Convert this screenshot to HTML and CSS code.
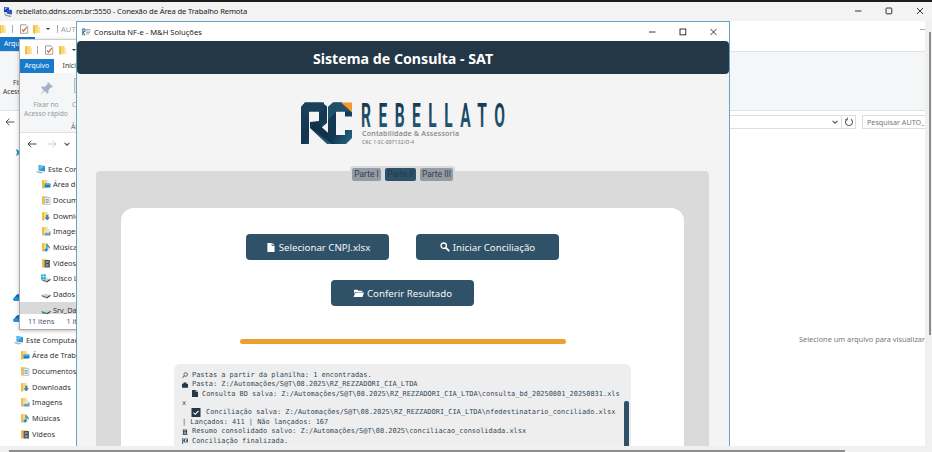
FILE: index.html
```html
<!DOCTYPE html>
<html lang="pt-BR">
<head>
<meta charset="utf-8">
<title>Conexão de Área de Trabalho Remota</title>
<link rel="stylesheet" href="styles.css">
</head>
<body>
<svg width="0" height="0" class="defs">
  <defs>
    <symbol id="folder" viewBox="0 0 10 10"><path d="M1 1h5.5v8H1z" fill="#f8d775"/><path d="M1 1l2 .8V10L1 9z" fill="#eebd4a"/><path d="M6.5 3H8v6H6.500z" fill="#fbe49b"/></symbol>
    <symbol id="check" viewBox="0 0 10 10"><path d="M1.500.8h5.500l1.700 1.700v6.800H1.500z" fill="#fff" stroke="#8c8c8c" stroke-width=".8"/><path d="M3 5.300l1.600 1.900L7.700 3" fill="none" stroke="#dc6030" stroke-width="1.200"/></symbol>
    <symbol id="pc" viewBox="0 0 10 10"><path d="M2.500 1l6.500 1v5.500l-6.500-1z" fill="#2d96d8"/><path d="M3 1.600l5 .8L3.500 6z" fill="#62bdf0"/><path d="M.5 7l5 .8 2 1-3 .7L.5 8.300z" fill="#a8b6c2"/></symbol>
    <symbol id="desk" viewBox="0 0 10 10"><use href="#folder"/><path d="M3.500 4.500h6v4h-6z" fill="#1582ca"/><path d="M4 5h5v1H4z" fill="#3fadea"/></symbol>
    <symbol id="docs" viewBox="0 0 10 10"><use href="#folder"/><path d="M3.500 2.500h5.500v7H3.500z" fill="#e8eff5" stroke="#92a6b5" stroke-width=".5"/><path d="M4.500 4.500h3M4.500 6h3.500M4.500 7.500h3" stroke="#568aae" stroke-width=".7"/></symbol>
    <symbol id="down" viewBox="0 0 10 10"><use href="#folder"/><path d="M5.300 3.800h2v2.500H9L6.300 9.300 3.700 6.300h1.600z" fill="#2982c9"/></symbol>
    <symbol id="imgs" viewBox="0 0 10 10"><use href="#folder"/><path d="M3.500 4.500h6v5h-6z" fill="#d5e6f1"/><path d="M3.500 9.500V7.500l2-1 1.500.8 2.500-2v4.200z" fill="#779cb5"/></symbol>
    <symbol id="music" viewBox="0 0 10 10"><use href="#folder"/><path d="M6 2v6M6 2.500c.5 1.500 2.500 1.500 2.500 3.800" fill="none" stroke="#1690dd" stroke-width="1.200"/><circle cx="5" cy="8" r="1.600" fill="#1690dd"/></symbol>
    <symbol id="video" viewBox="0 0 10 10"><use href="#folder"/><path d="M3.500 2h5.500v7.500H3.500z" fill="#45494d"/><path d="M5 3h2.500v2H5zM5 6h2.500v2.500H5z" fill="#8294a4"/><path d="M4.100 2.500v7M8.400 2.500v7" stroke="#ccc" stroke-width=".5" stroke-dasharray=".7 .7"/></symbol>
    <symbol id="disk" viewBox="0 0 10 10"><path d="M.5 6l4-1.200 5 1-3.500 2.200z" fill="#d2d2d2"/><path d="M.5 6L6 8v1.400L.5 7.300z" fill="#6f6f6f"/><path d="M6 8l3.500-2.200v1.300L6 9.400z" fill="#3f3f3f"/></symbol>
    <symbol id="windisk" viewBox="0 0 10 10"><use href="#disk"/><path d="M0 1.500h2v2H0zM2.400 1.200h2.400v2.300H2.400zM0 3.900h2v2H0zM2.400 3.900h2.400v2.300H2.400z" fill="#1ab0e8"/></symbol>
    <symbol id="netdisk" viewBox="0 0 10 10"><use href="#disk"/><path d="M1 6.800l4 1.400v1.600L1 8.300z" fill="#3aa64a"/></symbol>
    <symbol id="back" viewBox="0 0 10 10"><path d="M9.500 5H1M4.300 1.800L1 5l3.300 3.200" fill="none" stroke="currentColor"/></symbol>
    <symbol id="down-chev" viewBox="0 0 10 10"><path d="M2 3.500l3 3 3-3" fill="none" stroke="currentColor" stroke-width="1.400"/></symbol>
    <symbol id="pin" viewBox="0 0 16 16"><path d="M9.500 1l5.500 5-1.500.8-1 0-2.500 3 .2 2.700-1.200 1-3-2.800L1 15l4-5.200L2.300 7l1-1.200 2.900.2 3-2.700-.2-1z" fill="#a4b3ca"/></symbol>
    <symbol id="cloud" viewBox="0 0 12 8"><path d="M2.500 8C-.5 8-.3 4.500 2 4.300 2.300 1.500 5.500 0 8 1.500 11 1.500 12 4 12 8z" fill="#0f6cbd"/><path d="M2 4.300C5 3.500 7 5.500 8 8H2.500C0 8-.3 4.800 2 4.300z" fill="#2492e0"/></symbol>
    <linearGradient id="navy" x2="1" y2="1"><stop offset="0" stop-color="#1c405b"/><stop offset=".5" stop-color="#123650"/><stop offset="1" stop-color="#24698a"/></linearGradient>
    <linearGradient id="ink" y2="1" x2="0"><stop offset="0" stop-color="#133249"/><stop offset="1" stop-color="#25617c"/></linearGradient>
  </defs>
</svg>
<div class="screen">
  <header class="rdp-bar">
    <svg class="rdp-icon" viewBox="0 0 10 11"><path d="M1 1l5 .5v5L1 6z" fill="#2334ad"/><path d="M4 3.500l5 .6v4.500l-5-.8z" fill="#2c57c8"/><path d="M1.500 1.500l3 .4L2 4z" fill="#8fbaf5"/><path d="M1 6.500l3 2.500 5 1-2 1-5-1.500z" fill="#8c979c"/></svg>
    <span class="rdp-title">rebellato.ddns.com.br:5550 - Conexão de Área de Trabalho Remota</span>
    <svg class="win-btns" viewBox="0 0 70 10" fill="none" stroke="#333" stroke-width="1"><path d="M0 5h6.500M62 2l6 6M68 2l-6 6"/><rect x="31" y="2" width="5.800" height="5.800" rx=".8"/></svg>
  </header>
  <div class="middle">
    <main class="remote">
      <section class="explorer-back">
        <div class="quick">
          <svg class="i10"><use href="#folder"/></svg><i class="sep"></i><svg class="i10"><use href="#check"/></svg><svg class="i10"><use href="#folder"/></svg><b class="caret"></b><i class="sep"></i><span class="dim">AUTO_</span>
          <i class="tiny-min"></i>
        </div>
        <div class="tabs-row"><span class="file-tab">Arquivo</span></div>
        <div class="back-ribbon"><span>Fixar no</span><span>Acesso rápido</span></div>
        <div class="address">
          <svg class="i10 nav"><use href="#back"/></svg>
          <div class="path"><svg class="i8"><use href="#down-chev"/></svg><i></i><svg class="i10" viewBox="0 0 10 10"><path d="M3 2.200A3.500 3.500 0 1 0 7 2.200M3.300.5v2.300H1" fill="none" stroke="#666" stroke-width="1.100"/></svg></div>
          <div class="search">Pesquisar AUTO_</div>
        </div>
        <div class="back-body">
          <div class="back-side">
            <svg class="star" viewBox="0 0 8 9"><path d="M1 1l3 1.500L7 1 6 5l2 3-4-1.500L1 8l1-3z" fill="#289bd6"/></svg>
            <svg class="cloud c1"><use href="#cloud"/></svg>
            <svg class="cloud c2"><use href="#cloud"/></svg>
            <ul class="tree back-tree">
              <li class="root"><svg><use href="#pc"/></svg>Este Computador</li>
              <li><svg><use href="#desk"/></svg>Área de Trabalho</li>
              <li><svg><use href="#docs"/></svg>Documentos</li>
              <li><svg><use href="#down"/></svg>Downloads</li>
              <li><svg><use href="#imgs"/></svg>Imagens</li>
              <li><svg><use href="#music"/></svg>Músicas</li>
              <li><svg><use href="#video"/></svg>Vídeos</li>
            </ul>
          </div>
          <p class="preview">Selecione um arquivo para visualizar</p>
        </div>
      </section>

      <section class="explorer-front">
        <div class="quick"><svg class="i10"><use href="#folder"/></svg><i class="sep"></i><svg class="i10"><use href="#check"/></svg><svg class="i10"><use href="#folder"/></svg><b class="caret"></b></div>
        <div class="tabs-row"><span class="file-tab">Arquivo</span><span class="home-tab">Início</span></div>
        <div class="front-ribbon">
          <div class="pin"><svg><use href="#pin"/></svg><span>Fixar no</span><span>Acesso rápido</span></div>
          <div class="copy"><i></i><span>Copiar</span><em>Área</em></div>
        </div>
        <div class="front-nav"><svg class="i10"><use href="#back"/></svg><svg class="i10 fwd"><use href="#back"/></svg><svg class="i8"><use href="#down-chev"/></svg></div>
        <ul class="tree front-tree">
          <li class="root"><svg><use href="#pc"/></svg>Este Computador</li>
          <li><svg><use href="#desk"/></svg>Área de Trabalho</li>
          <li><svg><use href="#docs"/></svg>Documentos</li>
          <li><svg><use href="#down"/></svg>Downloads</li>
          <li><svg><use href="#imgs"/></svg>Imagens</li>
          <li><svg><use href="#music"/></svg>Músicas</li>
          <li><svg><use href="#video"/></svg>Vídeos</li>
          <li><svg><use href="#windisk"/></svg>Disco Local</li>
          <li><svg><use href="#disk"/></svg>Dados</li>
          <li class="sel"><svg><use href="#netdisk"/></svg>Srv_Dados</li>
        </ul>
        <div class="status"><span>11 itens</span><i></i><span>1 item</span></div>
      </section>

      <section class="app">
        <div class="app-title">
          <svg class="app-icon" viewBox="0 0 9 8"><path d="M.5 1h2.500M.8 1v6.500M3 1v2.500L1 4l2 3.500" fill="none" stroke="#35637a"/><path d="M4 1.500h4.500M4 3h4.500M4 4.500h4M4 6h3" stroke="#9fb2ba" stroke-width="1.100"/></svg>
          <span>Consulta NF-e - M&amp;H Soluções</span>
          <svg class="win-btns app-btns" viewBox="0 0 70 10" fill="none" stroke="#222" stroke-width=".9"><path d="M0 5h6.500M61.500 2l6 6M67.500 2l-6 6"/><rect x="31" y="2" width="5.800" height="5.800"/></svg>
        </div>
        <h1>Sistema de Consulta - SAT</h1>
        <svg class="logo" viewBox="0 0 210 48">
          <path d="M1 6L5 1.500H22L27 5.500V22L21 27 36 39V43H27L10 27V21L19 20V10.500H9V43H1z" fill="url(#navy)"/>
          <path d="M1 6L5 1.500H24V10.500H9V19z" fill="#1a405b"/>
          <path d="M10 26l6-5 20 18v4h-4z" fill="#123249"/>
          <path d="M28 6L33 1.500H42L52 11V15.500H45V10.500H36V34H45V29H52V37L46 43H34L28 37z" fill="url(#navy)"/>
          <path d="M28 6L33 1.500H42L50 10.500H36L28 19z" fill="#20506b"/>
          <path d="M41 1.500H52V11.500z" fill="#f2992e"/>
          <text class="brand" transform="translate(61 25.500) scale(.47 1)" textLength="306">REBELLATO</text>
          <text class="tagline" x="62" y="34.700" textLength="97">Contabilidade &amp; Assessoria</text>
          <text class="crc" x="62" y="42.500" textLength="52">CRC 1-SC-007132/O-4</text>
        </svg>
        <div class="panel">
          <nav class="parts"><span>Parte I</span><span class="on">Parte II</span><span>Parte III</span></nav>
          <div class="card">
            <div class="actions">
              <button><svg viewBox="0 0 8 10"><path d="M0 0h4.800v3.200H8V10H0zM5.500 0L8 2.500H5.500z" fill="#fff"/></svg>Selecionar CNPJ.xlsx</button>
              <button class="mag"><svg viewBox="0 0 10 10"><circle cx="3.700" cy="3.700" r="2.700" fill="none" stroke="#fff" stroke-width="1.300"/><path d="M5.700 5.700l3.500 3.500" stroke="#fff" stroke-width="1.800"/></svg>Iniciar Conciliação</button>
              <button class="open"><svg viewBox="0 0 11 8"><path d="M1 5V.8h3.500l.8 1h4V3H2.200zM2.600 3.500H11L9.500 8H.5z" fill="#fff"/></svg>Conferir Resultado</button>
            </div>
            <div class="progress"></div>
            <div class="log">
              <div class="line"><svg viewBox="0 0 6 7"><circle cx="3.700" cy="3.500" r="1.800" fill="none" stroke="#344a5a" stroke-width=".8"/><path d="M2.300 5L.5 6.800" stroke="#344a5a"/></svg>Pastas a partir da planilha: 1 encontradas.</div>
              <div class="line"><svg viewBox="0 0 6 7"><path d="M0 2.800h1.500V1.500h2.800v1.300H6V6.800H0z" fill="#233746"/></svg>Pasta: Z:/Automações/S@T\08.2025\RZ_REZZADORI_CIA_LTDA</div>
              <div class="line doc"><svg viewBox="0 0 6 7"><path d="M0 0h3.700v2H6v5H0zM4.300 0L6 1.500H4.300z" fill="#233746"/></svg>Consulta BD salva: Z:/Automações/S@T\08.2025\RZ_REZZADORI_CIA_LTDA\consulta_bd_20250801_20250831.xls</div>
              <div class="line">x</div>
              <div class="line tick"><svg viewBox="0 0 9 9"><path d="M0 0h9v9H0z" fill="#233746"/><path d="M2 4.700l1.700 1.600L7 3" fill="none" stroke="#fff" stroke-width="1.100"/></svg>Conciliação salva: Z:/Automações/S@T\08.2025\RZ_REZZADORI_CIA_LTDA\nfedestinatario_conciliado.xlsx</div>
              <div class="line">| Lançados: 411 | Não lançados: 167</div>
              <div class="line"><svg viewBox="0 0 6 7"><path d="M.8 2h4.400M.8 3.700h4.400M1.500 2v4M4.500 2v4M.5 6.400h5M3 2.500v4" stroke="#344a5a" stroke-width=".9"/></svg>Resumo consolidado salvo: Z:/Automações/S@T\08.2025\conciliacao_consolidada.xlsx</div>
              <div class="line"><svg viewBox="0 0 6 7"><path d="M.4 1.500V7M.4 2H6M.4 5H6M1 3.500h1.500M4 3.500h2M2.500 2v3M5.500 2v3" stroke="#344a5a" stroke-width=".8"/></svg>Conciliação finalizada.</div>
              <i class="log-thumb"></i>
            </div>
          </div>
        </div>
      </section>
    </main>
    <aside class="vscroll"><i></i></aside>
  </div>
  <footer class="hscroll"><i></i></footer>
</div>
</body>
</html>
```
FILE: styles.css
```css
* { box-sizing: border-box; }
body { margin: 0; width: 932px; height: 452px; overflow: hidden; font: 7.6px "Noto Sans", "Open Sans", sans-serif; color: #333; }
.defs { position: absolute; }
svg { display: block; flex: none; }
span, li, p, .line, .search { white-space: nowrap; }
.screen { display: flex; flex-direction: column; width: 932px; height: 452px; background: #f3f3f3; }

.rdp-bar { display: flex; align-items: center; height: 21px; flex: none; border-top: 2px solid #1f1d1b; padding: 0 7px 1px 3px; background: #f3f3f3; }
.rdp-icon { width: 10px; height: 11px; margin-right: 3px; }
.rdp-title { font-size: 7.6px; letter-spacing: -.12px; color: #222; }
.win-btns { width: 70px; height: 10px; margin-left: auto; }
.middle { display: flex; height: 425px; }
.remote { position: relative; width: 925px; height: 425px; overflow: hidden; background: #fff; }
.vscroll { width: 7px; padding: 11px 0 0 4px; background: #f0f0f0; }
.vscroll i { display: block; width: 2px; height: 303px; background: #8d8d8d; }
.hscroll { height: 6px; padding: 4px 0 0 9px; background: #f0f0f0; }
.hscroll i { display: block; width: 836px; height: 2px; background: #8d8d8d; }

.i10 { width: 10px; height: 10px; }
.i8 { width: 8px; height: 8px; color: #555; }
.quick { display: flex; align-items: center; height: 16px; }
.quick .sep { width: 1px; height: 8px; background: #aaa; }
.caret { border: 2px solid transparent; border-top-color: #333; border-bottom: 0; }
.file-tab { background: #1979ca; color: #fff; font-size: 6.8px; line-height: 14px; text-align: center; }
.tabs-row { display: flex; height: 14px; }

.explorer-back { height: 425px; }
.explorer-back .quick > .i10:first-child { margin: 0 4px 0 -2px; }
.explorer-back .quick .sep + .i10 { margin: 0 3px 0 6px; }
.explorer-back .caret { margin: 0 7px 0 4px; }
.explorer-back .dim { margin-left: 3px; color: #999; }
.tiny-min { width: 5px; height: 1px; margin-left: auto; background: #aaa; }
.explorer-back .file-tab { width: 35px; padding-left: 4px; text-align: left; }
.back-ribbon { display: flex; flex-direction: column; height: 60px; padding: 26px 0 0 3px; background: #f5f6f7; border: solid #e0e1e2; border-width: 1px 0; font-size: 6.6px; line-height: 9px; }
.back-ribbon span:first-child { padding-left: 10px; }
.address { display: flex; align-items: center; height: 22px; }
.address .nav { margin-left: 5px; color: #555; }
.path { display: flex; align-items: center; justify-content: flex-end; flex: none; width: 790px; height: 14px; margin-left: 51px; padding-right: 1px; border: 1px solid #ddd; }
.path i { width: 1px; height: 12px; margin: 0 2px 0 2px; background: #ddd; }
.search { flex: none; width: 80px; height: 14px; margin-left: 6px; padding-left: 4px; border: 1px solid #ddd; line-height: 12px; color: #767676; font-size: 7.2px; }
.back-body { display: flex; justify-content: space-between; height: 290px; }
.back-side { width: 77px; padding-top: 15px; }
.star { width: 8px; height: 9px; margin-left: 15px; }
.cloud { width: 12px; height: 8px; margin-left: 13px; }
.c1 { margin-top: 136px; }
.c2 { margin-top: 13px; }
.preview { width: 126px; margin: 199px 0 0; font-size: 7.36px; line-height: 14px; color: #777; }

.tree { list-style: none; margin: 0; padding: 0; font-size: 7.4px; }
.tree li { display: flex; align-items: center; height: 15.65px; gap: 2px; padding-left: 20px; }
.tree li svg { width: 10px; height: 10px; }
.back-tree { padding-top: 10px; }
.back-tree .root { padding-left: 14px; gap: 2px; }

.explorer-front { position: absolute; left: 19px; top: 18px; width: 62px; height: 291px; overflow: hidden; background: #fff; border: 1px solid #aaa; border-top-color: #ccc; box-shadow: 0 1px 4px rgba(0,0,0,.25); }
.explorer-front .quick { height: 19px; padding-left: 4px; }
.explorer-front .quick .sep { margin: 0 6px 0 3px; }
.explorer-front .quick .sep + .i10 { margin-right: 4px; }
.explorer-front .caret { margin-left: 4px; }
.explorer-front .file-tab { width: 36px; }
.home-tab { margin-left: 9px; font-size: 6.8px; line-height: 14px; }
.front-ribbon { display: flex; height: 60px; background: #f5f6f7; border-bottom: 1px solid #e0e1e2; font-size: 6.7px; line-height: 9px; color: #999; }
.pin { display: flex; flex: none; flex-direction: column; align-items: center; width: 52px; padding-top: 8px; }
.pin svg { width: 15px; height: 15px; margin-bottom: 4px; }
.copy { display: flex; flex: none; flex-direction: column; padding-top: 5px; }
.copy i { width: 9px; height: 15px; margin: 0 0 7px 2px; background: #e2e5e8; border: 1px solid #bbb; }
.copy em { margin-top: 13px; margin-left: -1px; font-style: normal; color: #666; }
.front-nav { display: flex; align-items: center; height: 22px; padding-left: 7px; color: #444; }
.front-nav .fwd { margin: 0 6px 0 10px; transform: scaleX(-1); color: #ccc; }
.front-tree { padding-top: 6px; height: 154px; overflow: visible; }
.front-tree li { padding-left: 21px; }
.front-tree .root { padding-left: 16px; gap: 2px; }
.front-tree .sel { background: #d9d9d9; }
.status { position: relative; display: flex; align-items: center; height: 17px; margin-top: 5px; padding: 0 0 3px 8px; gap: 6px; background: #fff; color: #47586f; font-size: 7.2px; }
.status i { width: 1px; height: 9px; background: #ddd; }

.app { position: absolute; left: 76px; top: 0; width: 654px; height: 460px; border: 1px solid #62a5c4; background: #f4f4f4; }
.app-title { display: flex; align-items: center; height: 19px; padding: 0 10px 0 5px; background: #fff; font-size: 7.6px; color: #222; }
.app-icon { width: 9px; height: 8px; margin-right: 3px; }
.app h1 { height: 33px; margin: 0; border-radius: 4px; background: #233746; color: #fff; font: bold 14.2px/35px "Noto Sans", sans-serif; text-align: center; }
.logo { width: 210px; height: 48px; margin: 27px 0 0 223px; }
.brand { font: 700 33px Roboto, sans-serif; fill: url(#ink); }
.tagline { font: 500 7.2px "Noto Sans", sans-serif; fill: #7c8388; }
.crc { font: 500 4.9px "Noto Sans", sans-serif; fill: #7c8388; }
.panel { width: 613px; height: 290px; margin: 22px 0 0 19px; padding: 0 25px; border-radius: 4px; background: #dadada; }
.parts { position: relative; top: -5px; display: flex; gap: 4px; width: 105px; height: 16px; margin: 0 auto; padding: 2px; border-radius: 3px; background: #d8dadb; }
.parts span { height: 13px; border-radius: 2px; background: #949ba3; color: #2e4150; font: 8.4px/13px Roboto, sans-serif; text-align: center; flex: 0 0 29px; }
.parts .on { flex-basis: 31px; background: #305268; color: #1e3c52; }
.parts span:last-child { flex-basis: 33px; }
.card { height: 270px; margin-top: 21px; padding-top: 26px; border-radius: 13px; background: #fff; }
.actions { display: flex; flex-wrap: wrap; justify-content: center; gap: 20px 27px; width: 330px; margin: 0 auto; }
.actions button { display: flex; align-items: center; justify-content: center; gap: 4px; width: 143px; height: 26px; padding: 0 0 0 2px; border: 0; border-radius: 4px; background: #305268; color: #f3f6f8; font: 9.7px "Noto Sans", sans-serif; }
.actions svg { width: 8px; height: 9px; }
.actions .mag svg { width: 10px; height: 10px; }
.actions .open svg { width: 11px; height: 8px; }
.actions .mag, .actions .open { gap: 3px; padding: 0; }
.progress { width: 326px; height: 5px; margin: 33px 0 0 119px; border-radius: 3px; background: #eda02f; }
.log { position: relative; width: 457px; height: 120px; margin: 20px 0 0 53px; padding: 6px 8px; border-radius: 6px; background: #eee; color: #344a5a; font: 6.94px "DejaVu Sans Mono", monospace; }
.line { display: flex; align-items: center; height: 9.45px; }
.line svg { width: 6px; height: 7px; margin-right: 4px; }
.line.doc { padding-left: 10px; }
.line.tick { padding-left: 9px; }
.line.tick svg { width: 10px; height: 9px; margin-right: 5px; }
.log-thumb { position: absolute; left: 450px; top: 37px; width: 5px; height: 90px; border-radius: 2px; background: #305268; }
```
